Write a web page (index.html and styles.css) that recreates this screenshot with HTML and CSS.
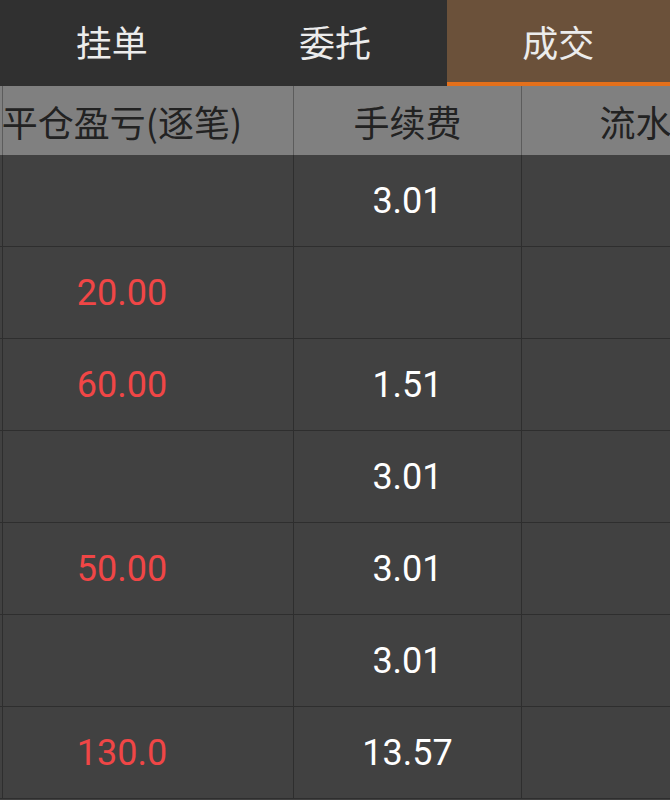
FILE: index.html
```html
<!DOCTYPE html>
<html lang="zh">
<head>
  <meta charset="UTF-8" />
  <meta name="viewport" content="width=device-width, initial-scale=1.0"/>
  <title>成交</title>
  <link rel="stylesheet" href="styles.css">
</head>
<body>
  <nav class="tabs">
    <div class="tab">挂单</div>
    <div class="tab">委托</div>
    <div class="tab active">成交</div>
  </nav>

  <div class="table">
    <div class="row head">
      <div class="stub"></div>
      <div class="cell c1">平仓盈亏(逐笔)</div>
      <div class="cell c2">手续费</div>
      <div class="cell c3">流水</div>
    </div>

    <div class="row">
      <div class="stub"></div>
      <div class="cell c1"></div>
      <div class="cell c2">3.01</div>
      <div class="cell c3"></div>
    </div>
    <div class="row">
      <div class="stub"></div>
      <div class="cell c1 loss">20.00</div>
      <div class="cell c2"></div>
      <div class="cell c3"></div>
    </div>
    <div class="row">
      <div class="stub"></div>
      <div class="cell c1 loss">60.00</div>
      <div class="cell c2">1.51</div>
      <div class="cell c3"></div>
    </div>
    <div class="row">
      <div class="stub"></div>
      <div class="cell c1"></div>
      <div class="cell c2">3.01</div>
      <div class="cell c3"></div>
    </div>
    <div class="row">
      <div class="stub"></div>
      <div class="cell c1 loss">50.00</div>
      <div class="cell c2">3.01</div>
      <div class="cell c3"></div>
    </div>
    <div class="row">
      <div class="stub"></div>
      <div class="cell c1"></div>
      <div class="cell c2">3.01</div>
      <div class="cell c3"></div>
    </div>
    <div class="row">
      <div class="stub"></div>
      <div class="cell c1 loss">130.0</div>
      <div class="cell c2">13.57</div>
      <div class="cell c3"></div>
    </div>
  </div>
</body>
</html>
```

FILE: styles.css
```css
body {
  margin: 0;
  background-color: #414141;
  color: #fff;
  font-family: Roboto, "Noto Sans CJK SC", sans-serif;
  overflow: hidden;
}

.tabs {
  display: flex;
  height: 86px;
  background-color: #303030;
}

.tab {
  flex: 1;
  display: flex;
  align-items: center;
  justify-content: center;
  font-family: "Noto Sans CJK SC", sans-serif;
  font-size: 36px;
  color: #ececec;
  box-sizing: border-box;
  border-bottom: 4px solid transparent;
}

.tab.active {
  background-color: #6b513a;
  border-bottom-color: #e4701b;
}

.table {
  width: 670px;
  overflow: hidden;
}

.row {
  display: flex;
  height: 92px;
  border-bottom: 1px solid #2e2e2e;
  box-sizing: border-box;
}

.row.head {
  height: 69px;
  border-bottom: none;
  background-color: #808080;
  color: #222;
  font-family: "Noto Sans CJK SC", sans-serif;
}

.stub {
  flex: 0 0 2px;
}

.cell {
  flex: 0 0 auto;
  display: flex;
  align-items: center;
  justify-content: center;
  box-sizing: border-box;
  border-left: 1px solid #2e2e2e;
  font-size: 36px;
  white-space: nowrap;
}

.head .cell {
  border-left-color: #5c5c5c;
}

.c1 {
  width: 291px;
  padding-right: 52px;
}

.c2 {
  width: 228px;
}

.c3 {
  width: 228px;
}

.loss {
  color: #f04646;
}
```
